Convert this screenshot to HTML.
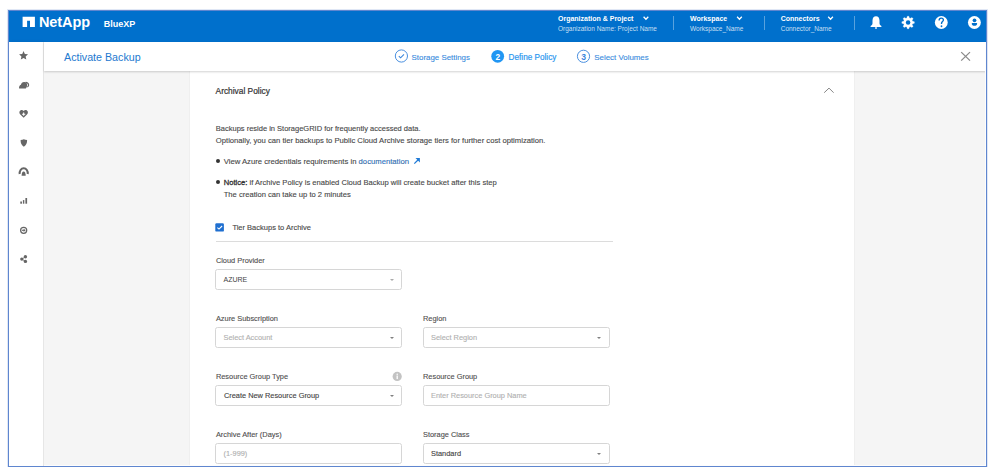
<!DOCTYPE html>
<html><head><meta charset="utf-8">
<style>
*{box-sizing:border-box;margin:0;padding:0}
html,body{width:999px;height:475px;overflow:hidden;background:#fff;font-family:"Liberation Sans",sans-serif;}
.a{position:absolute;white-space:nowrap;line-height:1}
#frame{position:absolute;left:8px;top:10px;width:979px;height:457px;border:1px solid #4472c4;overflow:hidden;background:#fff}
#hdr{position:absolute;left:8px;top:10px;width:979px;height:32px;background:#0070cc;border-top:1px solid #1a5cc0;box-shadow:0 1px 2px rgba(0,40,120,.08)}
.wt{color:#fff}
.sub{color:rgba(255,255,255,.78)}
.div{position:absolute;top:16px;width:1px;height:14px;background:rgba(255,255,255,.35)}
#side{position:absolute;left:9px;top:42px;width:35px;height:424px;background:#fff;border-right:1px solid #e6e6e6;box-shadow:1px 0 3px rgba(0,0,0,.08)}
#tbar{position:absolute;left:44px;top:42px;width:942px;height:29px;background:#fff;box-shadow:0 1px 2px rgba(0,0,0,.18)}
#content{position:absolute;left:44px;top:71px;width:942px;height:395px;background:#f5f5f5}
#card{position:absolute;left:190.3px;top:71px;width:664.2px;height:395px;background:#fff;box-shadow:0 0 1.5px rgba(0,0,0,.1)}
.txt{color:#484848;font-size:7.5px;-webkit-text-stroke:0.12px #484848}
.lbl{color:#505050;font-size:7.4px;-webkit-text-stroke:0.12px currentColor}
.box{position:absolute;width:187px;height:21px;border:1px solid #d6d6d6;border-radius:2.5px;background:#fff}
.ph{color:#b0b0b0}
.val{color:#444}
.car{position:absolute;width:0;height:0;border-left:2.6px solid transparent;border-right:2.6px solid transparent;border-top:2.4px solid #808080}
</style></head><body><div id="wrap" style="position:absolute;left:0;top:0;width:999px;height:475px;background:#fff">
<div id="frame"></div>
<div id="hdr"></div>
<!-- logo -->

<div class="a wt" style="left:39px;top:14.7px;font-size:14.5px;font-weight:700;letter-spacing:-0.1px">NetApp</div>
<div class="a wt" style="left:103.8px;top:19.9px;font-size:9px;font-weight:700">BlueXP</div>

<div class="a wt" style="left:558px;top:14.9px;font-size:7px;font-weight:700">Organization &amp; Project</div>
<div class="a sub" style="left:558px;top:25.6px;font-size:6.5px">Organization Name: Project Name</div>
<div class="div" style="left:673px"></div>
<div class="a wt" style="left:690px;top:14.9px;font-size:7px;font-weight:700">Workspace</div>
<div class="a sub" style="left:690px;top:25.6px;font-size:6.5px">Workspace_Name</div>
<div class="div" style="left:764px"></div>
<div class="a wt" style="left:780.7px;top:14.9px;font-size:7px;font-weight:700">Connectors</div>
<div class="a sub" style="left:780.7px;top:25.6px;font-size:6.5px">Connector_Name</div>
<div class="div" style="left:854px"></div>

<div id="side"></div>
<div id="content"></div>
<div id="card"></div>
<div id="tbar"></div>

<div class="a" style="left:64px;top:51.7px;font-size:10.7px;color:#2479cf">Activate Backup</div>

<div class="a" style="left:411.6px;top:53.7px;font-size:7.9px;color:#3a8cde;-webkit-text-stroke:0.12px #3a8cde">Storage Settings</div>
<div class="a" style="left:508.6px;top:53.7px;font-size:8.2px;font-weight:400;color:#2a96ef;-webkit-text-stroke:0.18px #2a96ef">Define Policy</div>
<div class="a" style="left:594.3px;top:53.7px;font-size:7.9px;color:#3a8cde;-webkit-text-stroke:0.12px #3a8cde">Select Volumes</div>

<div class="a" style="left:215.6px;top:86.5px;font-size:8.35px;font-weight:400;color:#333;-webkit-text-stroke:0.2px #333">Archival Policy</div>

<div class="a txt" style="left:215.8px;top:124.65px">Backups reside in StorageGRID for frequently accessed data.</div>
<div class="a txt" style="left:215.8px;top:137.1px;font-size:7.66px">Optionally, you can tier backups to Public Cloud Archive storage tiers for further cost optimization.</div>
<div class="a txt" style="left:223.7px;top:158px;font-size:7.7px">View Azure credentials requirements in <span style="color:#1f7ad6">documentation</span></div>
<div class="a txt" style="left:223.7px;top:179.1px;font-size:7.6px"><span style="color:#333;-webkit-text-stroke:0.3px #333">Notice:</span> if Archive Policy is enabled Cloud Backup will create bucket after this step</div>
<div class="a txt" style="left:223.7px;top:190.55px;font-size:7.6px">The creation can take up to 2 minutes</div>

<div class="a txt" style="left:232.4px;top:223.65px">Tier Backups to Archive</div>
<div class="a" style="left:215.5px;top:241px;width:397.5px;height:1px;background:#dcdcdc"></div>

<div class="a lbl" style="left:215.9px;top:256.65px">Cloud Provider</div>
<div class="box" style="left:215px;top:269px"></div>
<div class="a val" style="left:223.5px;top:275.9px;font-size:7px">AZURE</div>

<div class="a lbl" style="left:215.9px;top:314.55px">Azure Subscription</div>
<div class="box" style="left:215px;top:327px"></div>
<div class="a ph lbl" style="left:223.5px;top:333.8px">Select Account</div>
<div class="a lbl" style="left:423px;top:314.55px">Region</div>
<div class="box" style="left:423px;top:327px"></div>
<div class="a ph lbl" style="left:431px;top:333.8px">Select Region</div>

<div class="a lbl" style="left:215.9px;top:372.95px">Resource Group Type</div>
<div class="box" style="left:215px;top:385px"></div>
<div class="a val lbl" style="left:223.9px;top:391.8px">Create New Resource Group</div>
<div class="a lbl" style="left:423px;top:372.95px">Resource Group</div>
<div class="box" style="left:423px;top:385px"></div>
<div class="a ph lbl" style="left:431px;top:391.8px">Enter Resource Group Name</div>

<div class="a lbl" style="left:215.9px;top:430.85px">Archive After (Days)</div>
<div class="box" style="left:215px;top:443px"></div>
<div class="a ph lbl" style="left:223.5px;top:449.8px">(1-999)</div>
<div class="a lbl" style="left:423px;top:430.85px">Storage Class</div>
<div class="box" style="left:423px;top:443px"></div>
<div class="a val lbl" style="left:431px;top:449.8px">Standard</div>


<svg style="position:absolute;left:0;top:0" width="999" height="475" viewBox="0 0 999 475">
<g transform="translate(22.00 16.00)"><path d="M0.6 0.8H12.9V11H8V4.85H5.1V11H0.6Z" fill="#fff"/></g>
<g transform="translate(640.00 14.00)"><path d="M3.6 2.8L5.95 5.2L8.3 2.8" fill="none" stroke="#fff" stroke-width="1.3"/></g>
<g transform="translate(733.50 14.00)"><path d="M3.6 2.8L5.95 5.2L8.3 2.8" fill="none" stroke="#fff" stroke-width="1.3"/></g>
<g transform="translate(824.60 14.00)"><path d="M3.6 2.8L5.95 5.2L8.3 2.8" fill="none" stroke="#fff" stroke-width="1.3"/></g>
<g transform="translate(868.00 14.00)"><path d="M8 2.2C5.9 2.2 4.5 3.7 4.5 6.4V9.3C4.5 10.7 3.5 11.6 2.6 12.1V12.9H13.4V12.1C12.5 11.6 11.5 10.7 11.5 9.3V6.4C11.5 3.7 10.1 2.2 8 2.2Z" fill="#fff"/><rect x="6.9" y="13.2" width="2.2" height="1.6" rx="0.8" fill="#fff"/></g>
<g transform="translate(908.10 22.50)"><path d="M-0.77 -6.25 L0.77 -6.25 L1.57 -3.79 L3.88 -4.96 L4.96 -3.88 L3.79 -1.57 L6.25 -0.77 L6.25 0.77 L3.79 1.57 L4.96 3.88 L3.88 4.96 L1.57 3.79 L0.77 6.25 L-0.77 6.25 L-1.57 3.79 L-3.88 4.96 L-4.96 3.88 L-3.79 1.57 L-6.25 0.77 L-6.25 -0.77 L-3.79 -1.57 L-4.96 -3.88 L-3.88 -4.96 L-1.57 -3.79Z" fill="#fff" stroke="#fff" stroke-width="0.3" stroke-linejoin="round"/><circle r="4.5" fill="#fff"/><circle r="2.25" fill="#0070cc"/></g>
<g transform="translate(933.30 14.55)"><circle cx="8" cy="8" r="6.45" fill="#fff"/><path d="M5.8 5.9C5.8 4.5 6.7 3.6 8 3.6C9.3 3.6 10.1 4.4 10.1 5.5C10.1 6.9 8.25 7.2 8.25 8.7V9.5" fill="none" stroke="#0070cc" stroke-width="1.35"/><circle cx="8.2" cy="11.7" r="0.9" fill="#0070cc"/></g>
<g transform="translate(966.40 14.55)"><circle cx="8" cy="8" r="6.45" fill="#fff"/><circle cx="8.1" cy="5.75" r="1.85" fill="#0070cc"/><path d="M5.3 8.9Q5.3 8.5 5.8 8.5H10.4Q10.8 8.5 10.8 8.9C10.8 10.5 9.6 11.3 8.05 11.3C6.5 11.3 5.3 10.5 5.3 8.9Z" fill="#0070cc"/></g>
<g transform="translate(0.00 0.00)"><g fill="#666">
<path d="M23.55 51.05L24.84 53.97L28.02 54.30L25.64 56.43L26.31 59.55L23.55 57.95L20.79 59.55L21.46 56.43L19.08 54.30L22.26 53.97Z"/>
<path d="M19.1 88.5C18.8 86.9 19.5 85.3 20.9 84.8C21.2 82.9 22.6 81.8 24.3 81.9C25.9 82 27 83.1 27.2 84.6C27.3 86.2 26.6 87.6 25.8 88.5Z"/>
<path d="M25.6 82.4C27.4 82.5 28.7 83.6 28.6 85.2C28.5 86.1 27.9 86.7 27.3 87" fill="none" stroke="#666" stroke-width="1.2"/>
<path d="M23.66 117.8L20.3 114.4C19 113.1 19.1 111.2 20.4 110.4C21.5 109.7 22.8 110 23.66 111C24.5 110 25.8 109.7 26.9 110.4C28.2 111.2 28.3 113.1 27 114.4Z"/>
<path d="M20.6 139.9C22 139.8 22.9 139.5 23.85 139.2C24.8 139.5 25.7 139.8 27.1 139.9C27.2 143 26.1 145.3 23.85 146.7C21.6 145.3 20.5 143 20.6 139.9Z"/>
<path d="M19.7 174C19.3 170.9 21.1 168.3 23.7 168.3C26.3 168.3 28.1 170.9 27.7 174" fill="none" stroke="#666" stroke-width="2.1"/>
<path d="M21.6 175.7C21.6 173 22.5 171.5 23.65 171.5C24.8 171.5 25.7 173 25.7 175.7Z"/>
<rect x="20.3" y="201.5" width="1.65" height="2.2"/><rect x="22.9" y="200.1" width="1.4" height="3.6"/><rect x="25.4" y="198" width="1.7" height="5.7"/>
<circle cx="23.66" cy="230.3" r="3.05" fill="none" stroke="#666" stroke-width="1.25"/>
<path d="M21.9 230.3H24.6" stroke="#666" stroke-width="1.1"/><path d="M23.6 228.7L25.6 230.3L23.6 231.9Z" fill="#666"/>
<circle cx="21.8" cy="259.1" r="1.65"/><circle cx="25.4" cy="256.8" r="1.7"/><circle cx="25.4" cy="261.4" r="1.7"/>
<path d="M21.8 259.1L25.4 256.8M21.8 259.1L25.4 261.4" stroke="#666" stroke-width="0.8"/>
</g>
<path d="M23.66 112.6V115.8M22.06 114.2H25.26" stroke="#fff" stroke-width="1.1"/>
</g>
<g transform="translate(393.40 48.00)"><circle cx="8" cy="8" r="6.1" fill="none" stroke="#4a90e0" stroke-width="1"/><path d="M5.4 8.1L7.2 9.8L10.6 6.4" fill="none" stroke="#3a86dc" stroke-width="1.1"/></g>
<g transform="translate(489.70 48.30)"><circle cx="8" cy="8" r="6.4" fill="#2196f3"/></g>
<g transform="translate(575.50 48.30)"><circle cx="8" cy="8" r="6.1" fill="none" stroke="#4a90e0" stroke-width="1"/></g>
<g transform="translate(958.60 49.40)"><path d="M2.6 2.7L11.4 11.2M11.4 2.7L2.6 11.2" stroke="#8a8a8a" stroke-width="1.3"/></g>
<g transform="translate(822.00 84.00)"><path d="M2.2 8.7L7 4.1L11.6 8.7" fill="none" stroke="#777" stroke-width="0.9"/></g>
<g transform="translate(412.00 156.00)"><path d="M2.3 7.6L6.2 3.7" stroke="#1f7ad6" stroke-width="1.25"/><path d="M3.5 2.1H7.9V6.5Z" fill="#1f7ad6"/></g>
<g transform="translate(215.30 223.20)"><rect x="0" y="0" width="8.6" height="8.4" rx="1.2" fill="#1f6fd0"/><path d="M2.1 4.4L3.7 5.9L6.8 2.8" fill="none" stroke="#fff" stroke-width="1.1"/></g>
<g transform="translate(391.50 370.90)"><circle cx="5.7" cy="5.5" r="4.6" fill="#c3c3c3"/><rect x="5.05" y="4.6" width="1.3" height="3.6" fill="#fff"/><circle cx="5.7" cy="3.3" r="0.75" fill="#fff"/></g>
</svg>



<!-- bell -->

<!-- gear -->

<!-- question -->

<!-- user -->


<!-- sidebar icons -->


<!-- steps -->


<div class="a" style="left:495.4px;top:52.8px;font-size:8.4px;font-weight:700;color:#fff">2</div>

<div class="a" style="left:581.2px;top:53.1px;font-size:8.6px;font-weight:700;color:#3a86dc">3</div>
<!-- close -->

<!-- collapse chevron -->

<!-- bullets -->
<div class="a" style="left:215.6px;top:158.6px;width:4.2px;height:4.2px;border-radius:50%;background:#333"></div>
<div class="a" style="left:215.6px;top:179.9px;width:4.2px;height:4.2px;border-radius:50%;background:#333"></div>
<!-- external arrow -->

<!-- checkbox -->


<!-- info -->

<!-- carets -->
<div class="car" style="left:389.6px;top:278.8px;border-top-color:#aaa;border-left-width:2.3px;border-right-width:2.3px;border-top-width:2px"></div>
<div class="car" style="left:389.6px;top:336.8px"></div>
<div class="car" style="left:597px;top:336.8px"></div>
<div class="car" style="left:389.6px;top:394.8px"></div>
<div class="car" style="left:597px;top:452.8px"></div>

<div style="position:absolute;left:985px;top:42px;width:1px;height:424px;background:#fdfdfd"></div>
<div style="position:absolute;left:44px;top:465px;width:942px;height:1px;background:#fdfdfd"></div>
<!-- frame border on top -->
<div style="position:absolute;left:8px;top:10px;width:979px;height:457px;border:1px solid #5f86cf;box-shadow:0 0 0 1px rgba(68,114,196,.16),inset 0 0 0 0 transparent;pointer-events:none"></div>
<div style="position:absolute;left:0;top:467px;width:999px;height:8px;background:#fff"></div>
</div></body></html>
